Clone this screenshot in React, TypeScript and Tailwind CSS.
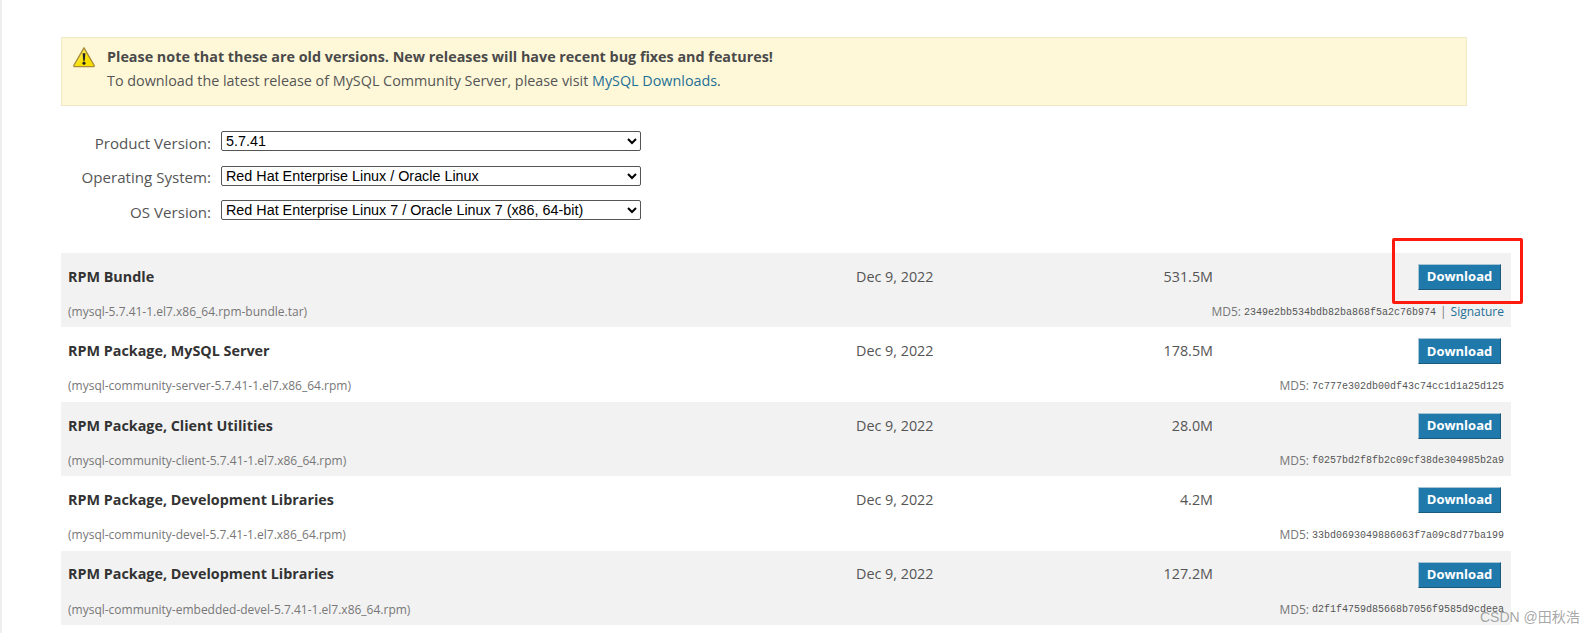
const rows = [
  { name: "RPM Bundle", date: "Dec 9, 2022", size: "531.5M", file: "(mysql-5.7.41-1.el7.x86_64.rpm-bundle.tar)", md5: "2349e2bb534bdb82ba868f5a2c76b974", signature: true },
  { name: "RPM Package, MySQL Server", date: "Dec 9, 2022", size: "178.5M", file: "(mysql-community-server-5.7.41-1.el7.x86_64.rpm)", md5: "7c777e302db00df43c74cc1d1a25d125" },
  { name: "RPM Package, Client Utilities", date: "Dec 9, 2022", size: "28.0M", file: "(mysql-community-client-5.7.41-1.el7.x86_64.rpm)", md5: "f0257bd2f8fb2c09cf38de304985b2a9" },
  { name: "RPM Package, Development Libraries", date: "Dec 9, 2022", size: "4.2M", file: "(mysql-community-devel-5.7.41-1.el7.x86_64.rpm)", md5: "33bd0693049886063f7a09c8d77ba199" },
  { name: "RPM Package, Development Libraries", date: "Dec 9, 2022", size: "127.2M", file: "(mysql-community-embedded-devel-5.7.41-1.el7.x86_64.rpm)", md5: "d2f1f4759d85668b7056f9585d9cdeea" },
];

const selects = [
  { label: "Product Version:", value: "5.7.41" },
  { label: "Operating System:", value: "Red Hat Enterprise Linux / Oracle Linux" },
  { label: "OS Version:", value: "Red Hat Enterprise Linux 7 / Oracle Linux 7 (x86, 64-bit)" },
];

const WarningIcon = () => (
  <svg width="24" height="22" viewBox="0 0 26 24" className="shrink-0">
    <defs>
      <linearGradient id="warn" x1="0" y1="0" x2="1" y2="1">
        <stop offset="0" stopColor="#fff7a0" />
        <stop offset="0.6" stopColor="#f7e000" />
      </linearGradient>
    </defs>
    <path d="M13 2 L24 21 Q24.5 22.5 23 22.5 L3 22.5 Q1.5 22.5 2 21 Z" fill="url(#warn)" stroke="#a88a3a" strokeWidth="1.5" strokeLinejoin="round" />
    <path d="M11.5 8 L14.5 8 L13.8 16 L12.2 16 Z" fill="#222" />
    <circle cx="13" cy="18.7" r="1.7" fill="#222" />
  </svg>
);

export default function App() {
  return (
    <div className="relative h-[633px] overflow-hidden border-l-2 border-[#eeeeee] bg-white pl-[59px] font-['Open_Sans',sans-serif] text-[14.35px] text-[#555555]">
      {/* old versions notice */}
      <div className="mt-[37px] flex h-[69px] w-[1406px] items-start border border-[#f0e8c4] bg-[#fef8d9] pl-[10px] pt-[8px]">
        <WarningIcon />
        <div className="ml-[11px] -mt-[1px] leading-[23.6px]">
          <p className="font-bold text-[#4a4a4a]">
            Please note that these are old versions. New releases will have recent bug fixes and features!
          </p>
          <p>
            To download the latest release of MySQL Community Server, please visit{" "}
            <a className="text-[#1f6f94]">MySQL Downloads</a>.
          </p>
        </div>
      </div>

      {/* version selects */}
      <div className="mt-[25px] flex flex-col gap-[14.5px]">
        {selects.map((s) => (
          <div key={s.label} className="flex h-[20px] items-center">
            <label className="mt-[4px] w-[150px] text-right text-[15.1px]">{s.label}</label>
            <select
              defaultValue={s.value}
              className="ml-[10px] h-[20px] w-[420px] rounded-[2px] border border-[#555555] bg-white font-['Liberation_Sans',sans-serif] text-[14.35px] text-black"
            >
              <option>{s.value}</option>
            </select>
          </div>
        ))}
      </div>

      {/* downloads */}
      <div className="mt-[33px] w-[1450px]">
        {rows.map((r, i) => (
          <div key={i} className={`h-[74.4px] px-[7px] pt-[11px] ${i % 2 === 0 ? "bg-[#f2f2f2]" : "bg-white"}`}>
            <div className="flex h-[26px] items-center">
              <span className="mb-[1px] w-[788px] font-bold text-[#333333]">{r.name}</span>
              <span className="mb-[1px] w-[150px]">{r.date}</span>
              <span className="mb-[1px] w-[207px] text-right">{r.size}</span>
              <button className="ml-auto mr-[3px] h-[26px] w-[83px] border border-t-[#a9c4d2] border-l-[#a9c4d2] border-b-[#1c5a7c] border-r-[#1c5a7c] bg-[#1f7aab] text-[13px] font-bold text-white">
                Download
              </button>
            </div>
            <div className="mt-[12px] flex h-[20px] items-center justify-between text-[12px] text-[#777777]">
              <span>{r.file}</span>
              <span className="flex items-center">
                MD5:<span className="ml-[3px] font-['Liberation_Mono',monospace] text-[10px] text-[#555555]">{r.md5}</span>
                {r.signature && (
                  <>
                    <span className="mx-[4px] text-[#777777]">|</span>
                    <a className="text-[#1f6f94]">Signature</a>
                  </>
                )}
              </span>
            </div>
          </div>
        ))}
      </div>

      {/* screenshot annotation */}
      <div className="absolute left-[1390px] top-[238px] h-[66px] w-[131px] rounded-[2px] border-[3px] border-[#ff1a0e]" />
      <div className="absolute left-[1478px] top-[607px] font-['Liberation_Sans','Noto_Sans_CJK_SC',sans-serif] text-[14px] text-[#8f8f8f]/80">
        CSDN @田秋浩
      </div>
    </div>
  );
}
